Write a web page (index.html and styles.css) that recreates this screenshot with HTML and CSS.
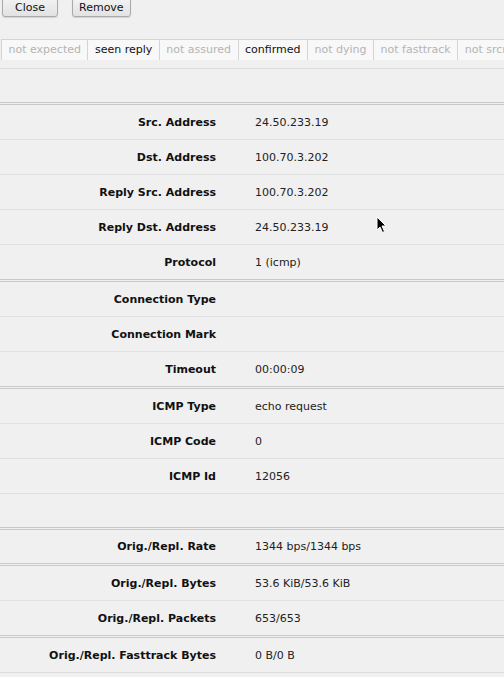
FILE: index.html
```html
<!DOCTYPE html>
<html>
<head>
<meta charset="utf-8">
<link rel="stylesheet" href="styles.css">
</head>
<body>
<div class="toolbar">
  <button class="btn">Close</button>
  <button class="btn">Remove</button>
</div>
<div class="flags-wrap">
  <div class="flags">
    <span class="flag">not expected</span>
    <span class="flag on">seen reply</span>
    <span class="flag">not assured</span>
    <span class="flag on">confirmed</span>
    <span class="flag">not dying</span>
    <span class="flag">not fasttrack</span>
    <span class="flag">not srcnat</span>
  </div>
</div>
<div class="spacer"></div>
<div class="section">
  <div class="row"><div class="label">Src. Address</div><div class="value">24.50.233.19</div></div>
  <div class="row"><div class="label">Dst. Address</div><div class="value">100.70.3.202</div></div>
  <div class="row"><div class="label">Reply Src. Address</div><div class="value">100.70.3.202</div></div>
  <div class="row"><div class="label">Reply Dst. Address</div><div class="value">24.50.233.19</div></div>
  <div class="row"><div class="label">Protocol</div><div class="value">1 (icmp)</div></div>
</div>
<div class="section">
  <div class="row"><div class="label">Connection Type</div><div class="value"></div></div>
  <div class="row"><div class="label">Connection Mark</div><div class="value"></div></div>
  <div class="row"><div class="label">Timeout</div><div class="value">00:00:09</div></div>
</div>
<div class="section">
  <div class="row"><div class="label">ICMP Type</div><div class="value">echo request</div></div>
  <div class="row"><div class="label">ICMP Code</div><div class="value">0</div></div>
  <div class="row"><div class="label">ICMP Id</div><div class="value">12056</div></div>
  <div class="row short"></div>
</div>
<div class="section">
  <div class="row short"><div class="label">Orig./Repl. Rate</div><div class="value">1344 bps/1344 bps</div></div>
</div>
<div class="section">
  <div class="row"><div class="label">Orig./Repl. Bytes</div><div class="value">53.6 KiB/53.6 KiB</div></div>
  <div class="row"><div class="label">Orig./Repl. Packets</div><div class="value">653/653</div></div>
</div>
<div class="section last">
  <div class="row"><div class="label">Orig./Repl. Fasttrack Bytes</div><div class="value">0 B/0 B</div></div>
</div>
<svg class="cursor" width="12" height="18" viewBox="0 0 12 18">
  <path d="M1 1 L1 14 L4 11 L6.5 16.5 L8.5 15.5 L6 10 L10 10 Z" fill="#000" stroke="#fff" stroke-width="1"/>
</svg>
</body>
</html>
```

FILE: styles.css
```css
html, body {
  margin: 0;
  padding: 0;
}
body {
  background: #f0f0f0;
  font-family: "DejaVu Sans", Verdana, sans-serif;
  font-size: 11px;
  color: #111;
  overflow: hidden;
  position: relative;
  height: 677px;
}
.toolbar {
  display: flex;
  gap: 14px;
  padding-left: 2px;
  margin-top: -6px;
  height: 23px;
}
.btn {
  font-family: "DejaVu Sans", Verdana, sans-serif;
  font-size: 11px;
  color: #111;
  min-width: 56px;
  height: 23px;
  padding: 4px 6px 0;
  margin: 0;
  border: 1px solid #a9a9a9;
  border-radius: 3px;
  background: linear-gradient(#f6f6f6, #e2e2e2);
  box-shadow: 0 1px 1px rgba(0,0,0,0.12);
}
.flags-wrap {
  margin-top: 22px;
  padding-bottom: 8px;
  border-bottom: 1px solid #dcdcdc;
  overflow: hidden;
}
.flags {
  display: flex;
  padding-left: 1px;
  white-space: nowrap;
}
.flag {
  flex: none;
  height: 20px;
  line-height: 20px;
  padding: 0 6.5px;
  border: 1px solid #d4d4d4;
  border-bottom: none;
  border-left: none;
  background: #f8f8f8;
  color: #b4b4b4;
}
.flag:first-child {
  border-left: 1px solid #d4d4d4;
}
.flag.on {
  color: #111;
}
.spacer {
  height: 33px;
}
.section {
  border-top: 3px double #c8c8c8;
}
.section.last {
  border-bottom: 1px solid #dcdcdc;
}
.row {
  display: grid;
  grid-template-columns: 216px 1fr;
  column-gap: 39px;
  align-items: center;
  height: 34px;
  border-bottom: 1px solid #e0e0e0;
}
.row.short {
  height: 33px;
}
.row:last-child {
  border-bottom: none;
}
.label {
  text-align: right;
  font-weight: bold;
  color: #111;
}
.value {
  color: #222;
}
.cursor {
  position: absolute;
  left: 376px;
  top: 216px;
}
```
